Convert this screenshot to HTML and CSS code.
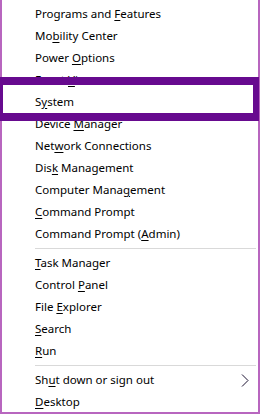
FILE: index.html
```html
<!DOCTYPE html>
<html lang="en">
<head>
    <meta charset="UTF-8">
    <title>Quick Link Menu</title>
    <link rel="stylesheet" href="styles.css">
</head>
<body>
    <div class="menu">
        <div class="item"><span>Programs and <u>F</u>eatures</span></div>
        <div class="item"><span>Mo<u>b</u>ility Center</span></div>
        <div class="item"><span>Power <u>O</u>ptions</span></div>
        <div class="item"><span>Event <u>V</u>iewer</span></div>
        <div class="item"><span>S<u>y</u>stem</span></div>
        <div class="item"><span>Device <u>M</u>anager</span></div>
        <div class="item"><span>Net<u>w</u>ork Connections</span></div>
        <div class="item"><span>Dis<u>k</u> Management</span></div>
        <div class="item"><span>Computer Mana<u>g</u>ement</span></div>
        <div class="item"><span><u>C</u>ommand Prompt</span></div>
        <div class="item"><span>Command Prompt (<u>A</u>dmin)</span></div>
        <div class="sep"></div>
        <div class="item"><span><u>T</u>ask Manager</span></div>
        <div class="item"><span>Control <u>P</u>anel</span></div>
        <div class="item"><span>File <u>E</u>xplorer</span></div>
        <div class="item"><span><u>S</u>earch</span></div>
        <div class="item"><span><u>R</u>un</span></div>
        <div class="sep"></div>
        <div class="item has-sub">
            <span>Sh<u>u</u>t down or sign out</span>
            <svg class="chevron" width="8" height="13" viewBox="0 0 8 13">
                <polyline points="1,0.5 7,6.5 1,12.5" fill="none" stroke="#1a1030" stroke-width="1"/>
            </svg>
        </div>
        <div class="item"><span><u>D</u>esktop</span></div>

        <div class="highlight"></div>
    </div>
</body>
</html>
```

FILE: styles.css
```css
body {
    margin: 0;
    background: #ffffff;
    font-family: "Noto Sans", "Open Sans", sans-serif;
    font-size: 11.5px;
    color: #000000;
}
.menu {
    position: relative;
    width: 260px;
    height: 414px;
    box-sizing: border-box;
    border: 2px solid #b866bf;
    border-top: none;
    padding-top: 3px;
    background: #ffffff;
}
.item {
    height: 22px;
    box-sizing: border-box;
    display: flex;
    align-items: center;
    padding-left: 33px;
    padding-bottom: 2px;
    white-space: nowrap;
}
.item u {
    text-decoration-thickness: 1px;
    text-underline-offset: 2px;
}
.has-sub {
    justify-content: space-between;
    padding-right: 9px;
    padding-bottom: 0;
}
.has-sub span {
    padding-bottom: 2px;
}
.chevron {
    display: block;
}
.sep {
    height: 1px;
    margin: 3px 2px 3px 33px;
    background: #d9d9d9;
}
.highlight {
    position: absolute;
    left: -2px;
    top: 77px;
    width: 259px;
    height: 44px;
    box-sizing: border-box;
    border-style: solid;
    border-color: #670a8f;
    border-width: 8px 6px 8px 3px;
}
```
